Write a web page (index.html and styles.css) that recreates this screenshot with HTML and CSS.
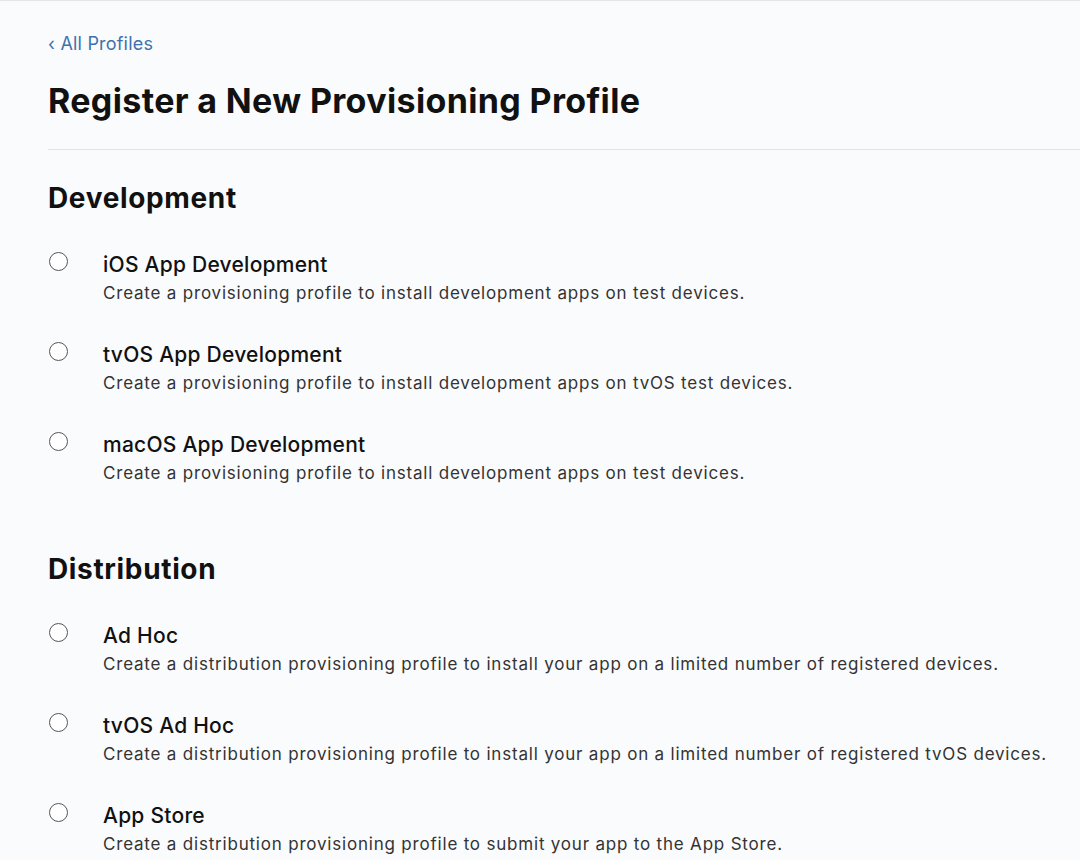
FILE: index.html
```html
<!DOCTYPE html>
<html lang="en">
<head>
    <meta charset="UTF-8">
    <meta name="viewport" content="width=device-width, initial-scale=1.0">
    <title>Register a New Provisioning Profile</title>
    <link rel="stylesheet" href="styles.css">
</head>
<body>
<div class="page">
    <header class="page-header">
        <a class="back-link" href="#">&lsaquo; All Profiles</a>
        <h1>Register a New Provisioning Profile</h1>
    </header>

    <section class="profile-group">
        <h2>Development</h2>

        <label class="option">
            <input type="radio" name="profile-type" value="ios-dev">
            <span class="option-text">
                <span class="option-title">iOS App Development</span>
                <span class="option-desc">Create a provisioning profile to install development apps on test devices.</span>
            </span>
        </label>

        <label class="option">
            <input type="radio" name="profile-type" value="tvos-dev">
            <span class="option-text">
                <span class="option-title">tvOS App Development</span>
                <span class="option-desc">Create a provisioning profile to install development apps on tvOS test devices.</span>
            </span>
        </label>

        <label class="option">
            <input type="radio" name="profile-type" value="macos-dev">
            <span class="option-text">
                <span class="option-title">macOS App Development</span>
                <span class="option-desc">Create a provisioning profile to install development apps on test devices.</span>
            </span>
        </label>
    </section>

    <section class="profile-group">
        <h2>Distribution</h2>

        <label class="option">
            <input type="radio" name="profile-type" value="adhoc">
            <span class="option-text">
                <span class="option-title">Ad Hoc</span>
                <span class="option-desc">Create a distribution provisioning profile to install your app on a limited number of registered devices.</span>
            </span>
        </label>

        <label class="option">
            <input type="radio" name="profile-type" value="tvos-adhoc">
            <span class="option-text">
                <span class="option-title">tvOS Ad Hoc</span>
                <span class="option-desc">Create a distribution provisioning profile to install your app on a limited number of registered tvOS devices.</span>
            </span>
        </label>

        <label class="option">
            <input type="radio" name="profile-type" value="appstore">
            <span class="option-text">
                <span class="option-title">App Store</span>
                <span class="option-desc">Create a distribution provisioning profile to submit your app to the App Store.</span>
            </span>
        </label>
    </section>
</div>
</body>
</html>
```

FILE: styles.css
```css
body {
    font-family: 'Inter', 'Noto Sans', sans-serif;
    background-color: #fafbfd;
    color: #111;
    margin: 0;
    padding: 0;
    border-top: 1px solid #e4e5e8;
}

.page {
    padding-left: 48px;
    overflow: hidden;
    height: 859px;
}

.page-header {
    padding-top: 33px;
    padding-bottom: 28px;
    border-bottom: 1px solid #e3e4e7;
}

.back-link {
    display: block;
    color: #3f72ad;
    text-decoration: none;
    font-size: 18px;
    line-height: 20px;
    letter-spacing: 0.2px;
}

h1 {
    margin: 27px 0 0;
    font-size: 34px;
    line-height: 40px;
    font-weight: 700;
    letter-spacing: 0.35px;
}

h2 {
    margin: 0 0 39px;
    font-size: 28px;
    line-height: 32px;
    font-weight: 700;
    letter-spacing: 0.65px;
}

.profile-group {
    padding-top: 32px;
}

.profile-group + .profile-group {
    padding-top: 30px;
}

.option {
    display: flex;
    align-items: flex-start;
    margin-bottom: 39px;
    cursor: pointer;
}

.option input {
    appearance: none;
    width: 19px;
    height: 19px;
    margin: -1px 35px 0 1px;
    border: 1.7px solid #55565a;
    border-radius: 50%;
    background: #fff;
    box-sizing: border-box;
    flex-shrink: 0;
}

.option-text {
    display: flex;
    flex-direction: column;
    gap: 5px;
}

.option-title {
    font-size: 21px;
    line-height: 24px;
    font-weight: 500;
    color: #111;
    letter-spacing: 0.25px;
}

.option-desc {
    font-size: 17px;
    line-height: 22px;
    color: #333;
    letter-spacing: 0.8px;
}
```
